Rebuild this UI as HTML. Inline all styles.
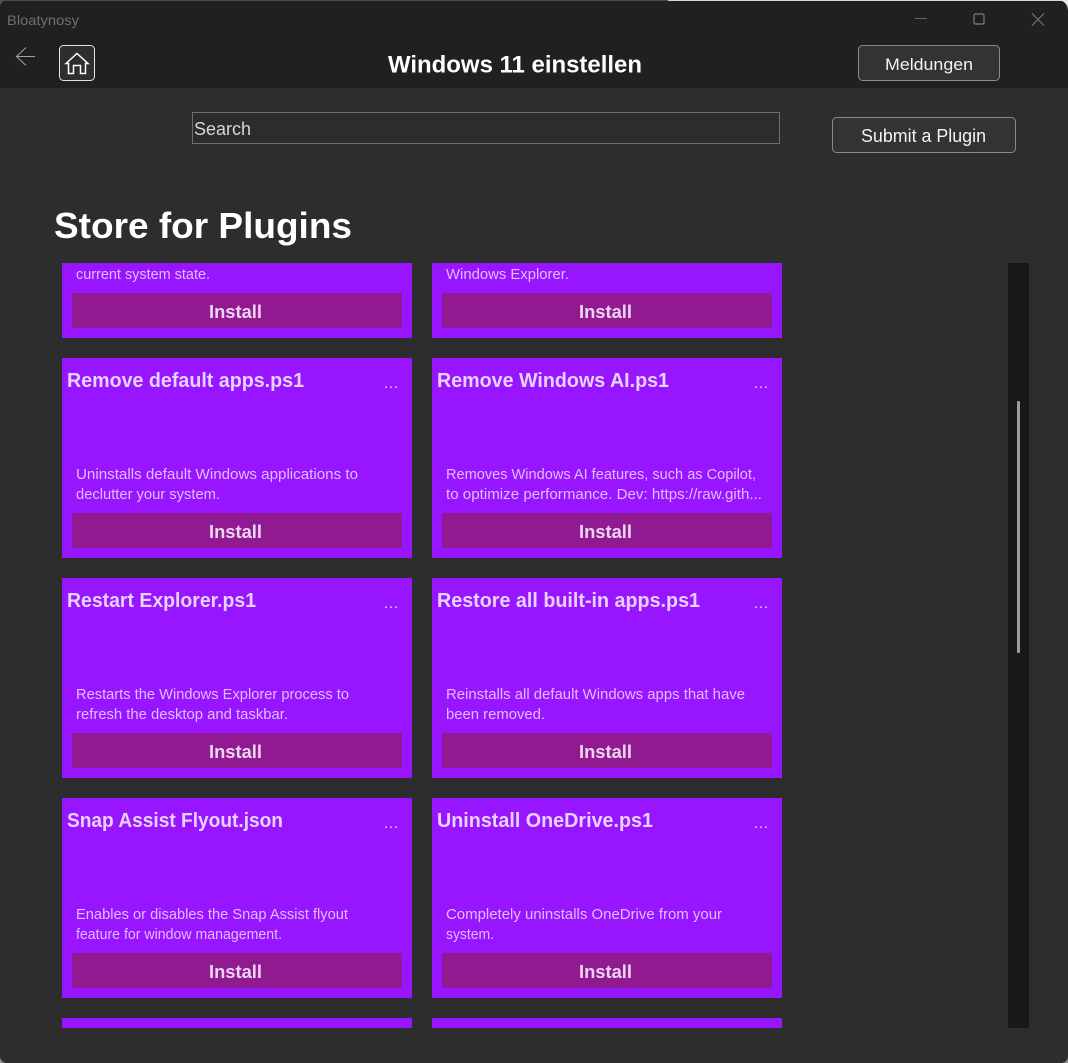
<!DOCTYPE html>
<html lang="en">
<head>
<meta charset="utf-8">
<title>Bloatynosy</title>
<style>
html,body{margin:0;padding:0;width:1068px;height:1063px;overflow:hidden;background:#2d2d2d}
svg{display:block;position:absolute;left:0;top:0}
text{font-family:"Liberation Sans",Arial,sans-serif;white-space:pre}
.t{font-size:20px;font-weight:700;fill:#e8d2fc}
.d{font-size:14.5px;fill:#e2bcff}
.i{font-size:18px;font-weight:700;fill:#ecd6f2}
.o{font-size:15px;fill:#e8d2fc}
.c{fill:#9716ff}
.b{fill:#911a90}
</style>
</head>
<body>
<svg width="1068" height="1063" viewBox="0 0 1068 1063" xmlns="http://www.w3.org/2000/svg">
<rect width="1068" height="1063" fill="#2d2d2d"/>
<rect width="1068" height="88" fill="#202020"/>
<rect width="668" height="1" fill="#4c4c4c"/>
<rect x="668" width="400" height="1" fill="#d8d8d8"/>
<path d="M1058 0H1068V10Q1067 1 1058 0Z" fill="#e6e6e6"/>
<path d="M0 6V0H6Q1 1 0 6Z" fill="#555"/>
<path d="M0 1057V1063H6Q1 1062 0 1057Z" fill="#8a8a8a"/>
<path d="M1068 1057V1063H1062Q1067 1062 1068 1057Z" fill="#8a8a8a"/>

<text x="7" y="25" font-size="14" fill="#707070" textLength="72" lengthAdjust="spacingAndGlyphs">Bloatynosy</text>
<path d="M915 18.500H927" stroke="#666" stroke-width="1" fill="none"/>
<rect x="974" y="14" width="10" height="10" rx="1.500" stroke="#707070" stroke-width="1.400" fill="none"/>
<path d="M1032 13.500L1044 25.500M1044 13.500L1032 25.500" stroke="#777" stroke-width="1.100" fill="none"/>

<path d="M35 56.500H16.500M26 47.500L16.500 56.500L26 65.500" stroke="#a3a3a3" stroke-width="1" fill="none"/>
<rect x="59.500" y="45.500" width="35" height="35" rx="4" fill="#2e2e2e" stroke="#e4e4e4" stroke-width="1"/>
<path d="M66 63.500L77 53.500L88 63.500H85.500V73.500H80.500V65.500H73.500V73.500H68.500V63.500Z" stroke="#fff" stroke-width="1.500" fill="none" stroke-linejoin="miter"/>

<text x="388" y="72.500" font-size="24" font-weight="700" fill="#fff" textLength="254" lengthAdjust="spacingAndGlyphs">Windows 11 einstellen</text>
<rect x="858.500" y="45.500" width="141" height="35" rx="4" fill="#333" stroke="#8b8b8b"/>
<text x="885" y="70" font-size="17" fill="#f2f2f2" textLength="88" lengthAdjust="spacingAndGlyphs">Meldungen</text>

<rect x="192.500" y="112.500" width="587" height="31" fill="#2c2c2c" stroke="#6e6e6e"/>
<text x="194" y="135" font-size="18" fill="#d6d6d6" textLength="57" lengthAdjust="spacingAndGlyphs">Search</text>
<rect x="832.500" y="117.500" width="183" height="35" rx="4" fill="#333" stroke="#8b8b8b"/>
<text x="861" y="142" font-size="18" fill="#f2f2f2" textLength="125" lengthAdjust="spacingAndGlyphs">Submit a Plugin</text>

<text x="54" y="238" font-size="36" font-weight="700" fill="#fff" textLength="298" lengthAdjust="spacingAndGlyphs">Store for Plugins</text>

<rect x="1008" y="263" width="21" height="765" fill="#181818"/>
<rect x="1017" y="401" width="3" height="252" rx="1" fill="#9c9c9c"/>

<!-- Row 0 (clipped) -->
<rect class="c" x="62" y="263" width="350" height="75"/>
<rect class="c" x="432" y="263" width="350" height="75"/>
<text class="d" x="76" y="279" textLength="134" lengthAdjust="spacingAndGlyphs">current system state.</text>
<text class="d" x="446" y="279" textLength="123" lengthAdjust="spacingAndGlyphs">Windows Explorer.</text>
<rect class="b" x="72" y="293" width="330" height="35"/>
<rect class="b" x="442" y="293" width="330" height="35"/>
<text class="i" x="209" y="318" textLength="53" lengthAdjust="spacingAndGlyphs">Install</text>
<text class="i" x="579" y="318" textLength="53" lengthAdjust="spacingAndGlyphs">Install</text>

<!-- Row 1 -->
<rect class="c" x="62" y="358" width="350" height="200"/>
<rect class="c" x="432" y="358" width="350" height="200"/>
<text class="t" x="67" y="387" textLength="237" lengthAdjust="spacingAndGlyphs">Remove default apps.ps1</text>
<text class="t" x="437" y="387" textLength="232" lengthAdjust="spacingAndGlyphs">Remove Windows AI.ps1</text>
<text class="o" x="384" y="388" textLength="14" lengthAdjust="spacing">...</text>
<text class="o" x="754" y="388" textLength="14" lengthAdjust="spacing">...</text>
<text class="d" x="76" y="479" textLength="282" lengthAdjust="spacingAndGlyphs">Uninstalls default Windows applications to</text>
<text class="d" x="76" y="499" textLength="144" lengthAdjust="spacingAndGlyphs">declutter your system.</text>
<text class="d" x="446" y="479" textLength="310" lengthAdjust="spacingAndGlyphs">Removes Windows AI features, such as Copilot,</text>
<text class="d" x="446" y="499" textLength="316" lengthAdjust="spacingAndGlyphs">to optimize performance. Dev: https://raw.gith...</text>
<rect class="b" x="72" y="513" width="330" height="35"/>
<rect class="b" x="442" y="513" width="330" height="35"/>
<text class="i" x="209" y="538" textLength="53" lengthAdjust="spacingAndGlyphs">Install</text>
<text class="i" x="579" y="538" textLength="53" lengthAdjust="spacingAndGlyphs">Install</text>

<!-- Row 2 -->
<rect class="c" x="62" y="578" width="350" height="200"/>
<rect class="c" x="432" y="578" width="350" height="200"/>
<text class="t" x="67" y="607" textLength="189" lengthAdjust="spacingAndGlyphs">Restart Explorer.ps1</text>
<text class="t" x="437" y="607" textLength="263" lengthAdjust="spacingAndGlyphs">Restore all built-in apps.ps1</text>
<text class="o" x="384" y="608" textLength="14" lengthAdjust="spacing">...</text>
<text class="o" x="754" y="608" textLength="14" lengthAdjust="spacing">...</text>
<text class="d" x="76" y="699" textLength="273" lengthAdjust="spacingAndGlyphs">Restarts the Windows Explorer process to</text>
<text class="d" x="76" y="719" textLength="212" lengthAdjust="spacingAndGlyphs">refresh the desktop and taskbar.</text>
<text class="d" x="446" y="699" textLength="299" lengthAdjust="spacingAndGlyphs">Reinstalls all default Windows apps that have</text>
<text class="d" x="446" y="719" textLength="99" lengthAdjust="spacingAndGlyphs">been removed.</text>
<rect class="b" x="72" y="733" width="330" height="35"/>
<rect class="b" x="442" y="733" width="330" height="35"/>
<text class="i" x="209" y="758" textLength="53" lengthAdjust="spacingAndGlyphs">Install</text>
<text class="i" x="579" y="758" textLength="53" lengthAdjust="spacingAndGlyphs">Install</text>

<!-- Row 3 -->
<rect class="c" x="62" y="798" width="350" height="200"/>
<rect class="c" x="432" y="798" width="350" height="200"/>
<text class="t" x="67" y="827" textLength="216" lengthAdjust="spacingAndGlyphs">Snap Assist Flyout.json</text>
<text class="t" x="437" y="827" textLength="216" lengthAdjust="spacingAndGlyphs">Uninstall OneDrive.ps1</text>
<text class="o" x="384" y="828" textLength="14" lengthAdjust="spacing">...</text>
<text class="o" x="754" y="828" textLength="14" lengthAdjust="spacing">...</text>
<text class="d" x="76" y="919" textLength="272" lengthAdjust="spacingAndGlyphs">Enables or disables the Snap Assist flyout</text>
<text class="d" x="76" y="939" textLength="206" lengthAdjust="spacingAndGlyphs">feature for window management.</text>
<text class="d" x="446" y="919" textLength="276" lengthAdjust="spacingAndGlyphs">Completely uninstalls OneDrive from your</text>
<text class="d" x="446" y="939" textLength="48" lengthAdjust="spacingAndGlyphs">system.</text>
<rect class="b" x="72" y="953" width="330" height="35"/>
<rect class="b" x="442" y="953" width="330" height="35"/>
<text class="i" x="209" y="978" textLength="53" lengthAdjust="spacingAndGlyphs">Install</text>
<text class="i" x="579" y="978" textLength="53" lengthAdjust="spacingAndGlyphs">Install</text>

<!-- Row 4 (clipped) -->
<rect class="c" x="62" y="1018" width="350" height="10"/>
<rect class="c" x="432" y="1018" width="350" height="10"/>
</svg>
</body>
</html>
